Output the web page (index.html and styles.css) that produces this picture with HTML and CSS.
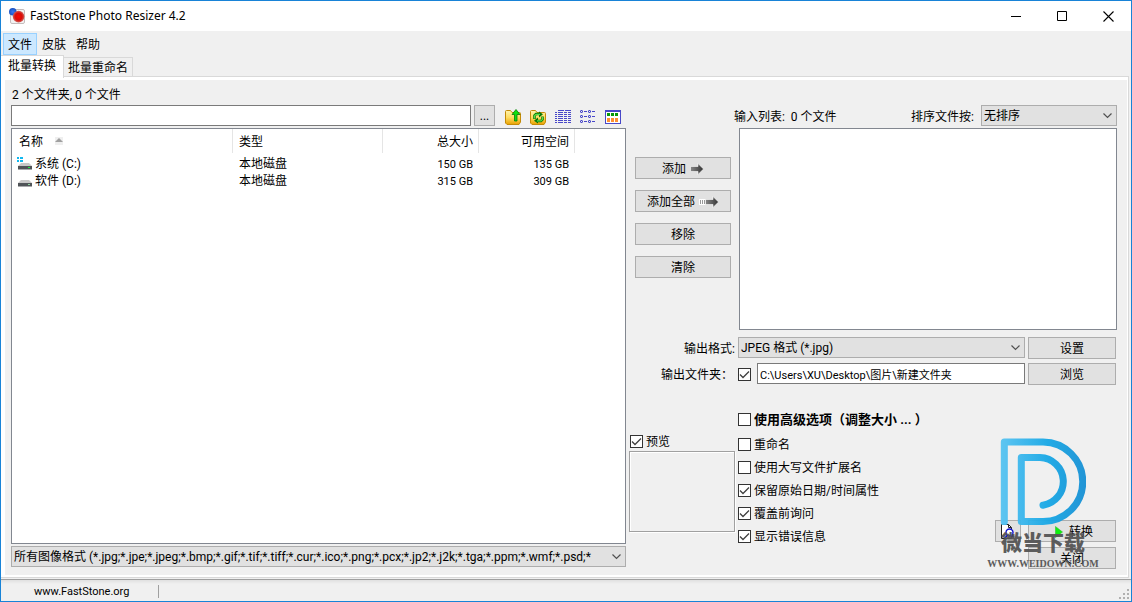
FILE: index.html
```html
<!DOCTYPE html>
<html lang="zh-CN">
<head>
<meta charset="utf-8">
<title>FastStone Photo Resizer 4.2</title>
<link rel="stylesheet" href="styles.css">
</head>
<body>
<div class="window">
  <header class="titlebar">
    <svg class="app-icon" width="16" height="16" viewBox="0 0 16 16" aria-hidden="true">
      <defs>
        <radialGradient id="red"><stop offset="0" stop-color="#f80800"/><stop offset=".6" stop-color="#d80c08"/><stop offset="1" stop-color="#d06058"/></radialGradient>
        <radialGradient id="blue"><stop offset="0" stop-color="#3878f0"/><stop offset="1" stop-color="#1850c0"/></radialGradient>
      </defs>
      <rect x="1.500" y="1.500" width="14" height="14" rx="1.500" fill="#f2f2f2" stroke="#c4bcbc"/>
      <circle cx="3.800" cy="3.800" r="3.800" fill="url(#blue)"/>
      <circle cx="9.600" cy="8.600" r="5.800" fill="url(#red)"/>
    </svg>
    <h1 class="title">FastStone Photo Resizer 4.2</h1>
    <div class="window-controls">
      <button type="button" aria-label="最小化"><svg width="11" height="11" viewBox="0 0 11 11"><path d="M0 5.500H10" stroke="#000"/></svg></button>
      <button type="button" aria-label="最大化"><svg width="11" height="11" viewBox="0 0 11 11"><path d="M.5 .5H9.500V9.500H.5Z" fill="none" stroke="#000"/></svg></button>
      <button type="button" aria-label="关闭窗口"><svg width="11" height="11" viewBox="0 0 11 11"><path d="M.5 .5L10.500 10.500M10.500 .5L.5 10.500" stroke="#000" stroke-width="1.100"/></svg></button>
    </div>
  </header>
  <nav class="menubar">
    <button type="button" class="menu-item current">文件</button>
    <button type="button" class="menu-item">皮肤</button>
    <button type="button" class="menu-item">帮助</button>
  </nav>
  <div class="tabs" role="tablist">
    <button type="button" class="tab selected" role="tab" aria-selected="true">批量转换</button>
    <button type="button" class="tab" role="tab" aria-selected="false">批量重命名</button>
  </div>
  <main class="panel">
    <div class="workspace">
      <section class="browser">
        <p class="summary">2 个文件夹, 0 个文件</p>
        <div class="path-row">
          <input class="field path" type="text" aria-label="路径">
          <button type="button" class="btn dots">...</button>
          <div class="toolbar">
            <button type="button" class="tool" aria-label="向上"><svg width="16" height="16" viewBox="0 0 16 16">
              <defs><linearGradient id="folder" x2="0" y2="1"><stop offset="0" stop-color="#fff3ac"/><stop offset=".5" stop-color="#ffdc60"/><stop offset="1" stop-color="#e8a000"/></linearGradient></defs>
              <path d="M.5 2.500Q.5 1.500 1.500 1.500H5.500L7 3.500H14.500Q15.500 3.500 15.500 4.500V13L14 15.500H2L.5 14Z" fill="url(#folder)" stroke="#c48a08"/>
              <path d="M11 .5L15 5.500H12V12H9.500V5.500H7Z" fill="#10e010" stroke="#087808" stroke-width=".8"/></svg></button>
            <button type="button" class="tool" aria-label="刷新"><svg width="16" height="16" viewBox="0 0 16 16">
              <path d="M.5 2.500Q.5 1.500 1.500 1.500H5.500L7 3.500H14.500Q15.500 3.500 15.500 4.500V13L14 15.500H2L.5 14Z" fill="url(#folder)" stroke="#c48a08"/>
              <path d="M4.500 10V6.500L6 5H9.500" fill="none" stroke="#087808" stroke-width="2.600"/><path d="M9 2.500L13 5.200L9 8.500Z" fill="#087808"/><path d="M4.500 9.500V6.800L6 5.300H10" fill="none" stroke="#58e048" stroke-width="1.200"/>
              <path d="M12.500 7.500V10.500L11 12H7.500" fill="none" stroke="#087808" stroke-width="2.600"/><path d="M8 8.500L4 11.800L8 14.500Z" fill="#087808"/><path d="M12.500 8V10.300L11 11.800H7" fill="none" stroke="#58e048" stroke-width="1.200"/></svg></button>
            <button type="button" class="tool" aria-label="详细信息"><svg width="16" height="14" viewBox="0 0 16 14">
              <path d="M3 .5H16" stroke="#4848c8" stroke-dasharray="6 1"/><path d="M0 2.500H2M0 4.500H2M0 6.500H2M0 8.500H2M0 10.500H2M0 12.500H2M3 2.500H16M3 4.500H16M3 6.500H16M3 8.500H16M3 10.500H16M3 12.500H16" stroke="#4848c8" stroke-dasharray="5 1 3 1 3"/></svg></button>
            <button type="button" class="tool" aria-label="列表"><svg width="16" height="14" viewBox="0 0 16 14" fill="none" stroke="#4848c8">
              <path d="M.5 .5h2v2h-2zM8.500 .5h2v2h-2zM.5 5.500h2v2h-2zM8.500 5.500h2v2h-2zM.5 10.500h2v2h-2zM8.500 10.500h2v2h-2z" stroke-dasharray="1.500 .5"/><path d="M4 1.500h3M12 1.500h3M4 6.500h3M12 6.500h3M4 11.500h3M12 11.500h3"/></svg></button>
            <button type="button" class="tool" aria-label="缩略图"><svg width="16" height="14" viewBox="0 0 16 14">
              <path d="M0 0H16V14H0Z" fill="#4848c8"/><path d="M1 2H15V13H1Z" fill="#fff"/><path d="M2 3h3v3h-3zM6 3h3v3h-3zM10 3h3v3h-3z" fill="#089808"/><path d="M2 8h3v4h-3zM6 8h3v4h-3zM10 8h3v4h-3z" fill="#ff9030"/></svg></button>
          </div>
        </div>
        <div class="list-box">
          <table class="files">
            <colgroup><col class="c-name"><col class="c-type"><col class="c-size"><col class="c-size"><col></colgroup>
            <thead>
              <tr><th scope="col">名称<svg class="sort" width="8" height="8" viewBox="0 0 8 8" aria-hidden="true"><path d="M0 0H8V8H0Z" fill="#efefef"/><path d="M4 1L8 5H0Z" fill="#a0a0a0"/></svg></th><th scope="col">类型</th><th scope="col" class="num">总大小</th><th scope="col" class="num">可用空间</th><td></td></tr>
            </thead>
            <tbody>
              <tr><td class="name"><svg width="16" height="16" viewBox="0 0 16 16" aria-hidden="true"><path d="M4 6H12L15 9H1Z" fill="#c8c8c8"/><path d="M1 9H15V12.500H1Z" fill="#505458"/><path d="M11 10h2v1h-2z" fill="#20f040"/><path d="M0 0h2v2h-2zM3 0h3v2h-3zM0 3h2v2h-2zM3 3h3v2h-3z" fill="#10b8f0"/></svg>系统 (C:)</td><td>本地磁盘</td><td class="num small">150 GB</td><td class="num small">135 GB</td><td></td></tr>
              <tr><td class="name"><svg width="16" height="16" viewBox="0 0 16 16" aria-hidden="true"><path d="M4 6H12L15 9H1Z" fill="#c8c8c8"/><path d="M1 9H15V12.500H1Z" fill="#505458"/><path d="M11 10h2v1h-2z" fill="#90d8a0"/></svg>软件 (D:)</td><td>本地磁盘</td><td class="num small">315 GB</td><td class="num small">309 GB</td><td></td></tr>
            </tbody>
          </table>
        </div>
        <select class="combo" aria-label="文件类型"><option>所有图像格式 (*.jpg;*.jpe;*.jpeg;*.bmp;*.gif;*.tif;*.tiff;*.cur;*.ico;*.png;*.pcx;*.jp2;*.j2k;*.tga;*.ppm;*.wmf;*.psd;*</option></select>
      </section>

      <section class="output">
        <div class="sort-row">
          <span>输入列表:&nbsp; 0 个文件</span>
          <label for="sort">排序文件按:</label>
          <select id="sort" class="combo sort-select"><option>无排序</option></select>
        </div>
        <div class="pick-row">
          <div class="actions">
            <button type="button" class="btn">添加<svg width="14" height="12" viewBox="0 0 14 12" aria-hidden="true"><defs><linearGradient id="arrow"><stop offset="0" stop-color="#888"/><stop offset="1" stop-color="#333"/></linearGradient></defs><path d="M.5 3.500H8V.5L13.500 6L8 11.500V8.500H.5Z" fill="url(#arrow)" stroke="#fff" stroke-width=".6"/></svg></button>
            <button type="button" class="btn">添加全部<svg width="20" height="12" viewBox="0 0 20 12" aria-hidden="true"><path d="M0 3H7V9H0Z" fill="#fff"/><path d="M1 4h1v4h-1zM3 4h1v4h-1zM5 4h1v4h-1z" fill="#999"/><path d="M6.500 3.500H14V.5L19.500 6L14 11.500V8.500H6.500Z" fill="url(#arrow)" stroke="#fff" stroke-width=".6"/></svg></button>
            <button type="button" class="btn">移除</button>
            <button type="button" class="btn">清除</button>
          </div>
          <div class="list-box input-list"></div>
        </div>
        <div class="form">
          <label for="format">输出格式:</label>
          <select id="format" class="combo"><option>JPEG 格式 (*.jpg)</option></select>
          <button type="button" class="btn">设置</button>
          <label for="folder-path" class="folder-label">输出文件夹：</label>
          <div class="folder">
            <input type="checkbox" class="check" checked aria-label="使用输出文件夹">
            <input id="folder-path" class="field" type="text" value="C:\Users\XU\Desktop\图片\新建文件夹">
          </div>
          <button type="button" class="btn">浏览</button>
        </div>
        <div class="bottom">
          <div class="preview">
            <label class="option"><input type="checkbox" class="check" checked>预览</label>
            <div class="preview-box"></div>
          </div>
          <div class="options">
            <label class="option strong"><input type="checkbox" class="check">使用高级选项（调整大小 ... ）</label>
            <label class="option"><input type="checkbox" class="check">重命名</label>
            <label class="option"><input type="checkbox" class="check">使用大写文件扩展名</label>
            <label class="option"><input type="checkbox" class="check" checked>保留原始日期/时间属性</label>
            <label class="option"><input type="checkbox" class="check" checked>覆盖前询问</label>
            <label class="option"><input type="checkbox" class="check" checked>显示错误信息</label>
          </div>
          <div class="run">
            <button type="button" class="btn" aria-label="查看"><svg width="16" height="16" viewBox="0 0 16 16" aria-hidden="true"><path d="M1.500 .5H8.500L11.500 3.500V14.500H1.500Z" fill="#fff" stroke="#222"/><path d="M8.500 .5V3.500H11.500" fill="none" stroke="#222"/><circle cx="9.500" cy="8.500" r="3.500" fill="#fff" stroke="#1010d0" stroke-width="1.400"/><path d="M7 11.500L4.500 14.500M12 11.500L14 13" stroke="#1010d0" stroke-width="1.600"/></svg></button>
            <button type="button" class="btn convert"><svg width="8" height="12" viewBox="0 0 8 12" aria-hidden="true"><path d="M.5 .5L7.500 6L.5 11.500Z" fill="#10f010" stroke="#30c030" stroke-width=".6"/></svg>转换</button>
            <button type="button" class="btn close">关闭</button>
            <div class="watermark">
              <svg width="86" height="88" viewBox="0 0 86 88" aria-hidden="true">
                <defs><linearGradient id="mark" gradientUnits="userSpaceOnUse" x1="0" y1="0" x2="86" y2="0"><stop offset="0" stop-color="#58c4f2"/><stop offset=".55" stop-color="#18a8e6"/><stop offset="1" stop-color="#1890d4"/></linearGradient></defs>
                <path d="M4.300 85V5H43A39.500 39.500 0 0 1 43 84.500H21.300V20.500H40A24 24 0 0 1 43 68.200" fill="none" stroke="url(#mark)" stroke-width="7" stroke-linecap="round" stroke-linejoin="round"/>
              </svg>
              <span class="mark-name">微当下载</span>
              <span class="mark-site">WWW.WEIDOWN.COM</span>
            </div>
          </div>
        </div>
      </section>
    </div>
  </main>
  <footer class="statusbar">
    <span class="site">www.FastStone.org</span>
    <svg width="12" height="12" viewBox="0 0 12 12" aria-hidden="true"><path d="M8 0h2v2h-2zM4 4h2v2h-2zM8 4h2v2h-2zM0 8h2v2h-2zM4 8h2v2h-2zM8 8h2v2h-2z" fill="#b0b0b0"/></svg>
  </footer>
</div>
</body>
</html>
```
FILE: styles.css
```css
* { box-sizing: border-box; }

body {
  margin: 0;
  color: #000;
  background: #f0f0f0;
}

body, button, input, select {
  font-family: Roboto, "Noto Sans CJK SC", sans-serif;
  font-size: 12px;
  line-height: 16px;
}

button, input, select { margin: 0; color: inherit; }

svg { flex: none; }

.window {
  display: flex;
  flex-direction: column;
  min-height: 100vh;
  border: 1px solid #1883d7;
}

.titlebar {
  display: flex;
  align-items: center;
  height: 30px;
  padding-left: 8px;
  background: #fff;
}

.title {
  flex: 1;
  margin: 0 0 0 5px;
  font-family: "Noto Sans", sans-serif;
  font-size: 12px;
  font-weight: 400;
}

.window-controls { display: flex; }

.window-controls button {
  display: flex;
  align-items: center;
  justify-content: center;
  width: 46px;
  height: 30px;
  padding: 0;
  border: 0;
  background: none;
}

.menubar {
  display: flex;
  padding: 2px 2px 0;
}

.menu-item {
  height: 22px;
  padding: 2px 4px 0;
  border: 1px solid transparent;
  background: none;
}

.menu-item.current {
  border-color: #99d1ff;
  background: #cce8ff;
}

.tabs {
  display: flex;
  align-items: flex-end;
  height: 21px;
}

.tab {
  height: 19px;
  padding: 2px 4px 0;
  border: 1px solid #d9d9d9;
  border-bottom: 0;
  border-left: 0;
  background: #f0f0f0;
}

.tab.selected {
  z-index: 1;
  height: 23px;
  margin-bottom: -2px;
  padding: 0 7px 2px;
  background: #fff;
}

.panel {
  display: flex;
  flex: 1;
  margin-right: 2px;
  padding: 3px 1px 2px 4px;
  border: 1px solid #d9d9d9;
  border-left: 0;
  background: #fff;
}

.workspace {
  display: grid;
  flex: 1;
  grid-template-columns: minmax(0, 1fr) 488px;
  gap: 3px;
  padding: 0 10px 6px 6px;
  background: #f0f0f0;
}

.browser {
  display: flex;
  flex-direction: column;
  gap: 2px;
  min-width: 0;
  padding-bottom: 2px;
}

.summary { margin: 0; padding: 7px 1px 0; }

.path-row { display: flex; gap: 3px; }

.field {
  min-width: 0;
  height: 21px;
  padding: 0 2px;
  border: 1px solid #7a7a7a;
  background: #fff;
}

.path { flex: 1; }

.btn {
  display: flex;
  align-items: center;
  justify-content: center;
  gap: 4px;
  height: 22px;
  padding: 1px 0 0;
  border: 1px solid #adadad;
  background: #e1e1e1;
}

.dots { width: 21px; height: 21px; }

.toolbar {
  display: flex;
  align-items: center;
  gap: 9px;
  width: 128px;
  padding: 2px 0 0 7px;
}

.tool {
  display: flex;
  padding: 0;
  border: 0;
  background: none;
}

.list-box {
  flex: 1;
  border: 1px solid #828790;
  background: #fff;
}

.files {
  width: 100%;
  border-collapse: separate;
  border-spacing: 0;
  table-layout: fixed;
}

.c-name { width: 221px; }
.c-type { width: 150px; }
.c-size { width: 96px; }

.files th, .files td {
  height: 17px;
  padding: 0 6px;
  font-weight: 400;
  line-height: 17px;
  text-align: left;
}

.files th {
  height: 27px;
  background: linear-gradient(#e5e5e5, #e5e5e5) right top / 1px 24px no-repeat;
}

.files th:first-child { padding-left: 7px; }

.files .num { text-align: right; }
.files .small { font-size: 11px; }

.files .name {
  display: flex;
  align-items: center;
  gap: 2px;
  padding-left: 5px;
}

.sort { margin: 0 0 1px 12px; }

.combo {
  width: 100%;
  height: 21px;
  padding: 1px 20px 0 2px;
  border: 1px solid #adadad;
  border-radius: 0;
  appearance: none;
  background: #e1e1e1 url("data:image/svg+xml,%3Csvg xmlns='http://www.w3.org/2000/svg' width='9' height='6'%3E%3Cpath d='M.5 .5L4.500 4.500L8.500 .5' fill='none' stroke='%23505050' stroke-width='1.200'/%3E%3C/svg%3E") no-repeat right 4px center;
  text-overflow: clip;
}

.output {
  display: flex;
  flex-direction: column;
  padding-top: 25px;
}

.sort-row {
  display: flex;
  align-items: center;
  gap: 7px;
  margin-bottom: 2px;
  padding-left: 105px;
}

.sort-row span { flex: 1; }
.sort-row span, .sort-row label { padding-top: 3px; }

.sort-select { width: 136px; }

.pick-row {
  display: flex;
  flex: 1;
  gap: 4px;
  min-height: 200px;
}

.actions {
  display: flex;
  flex-direction: column;
  gap: 11px;
  width: 106px;
  padding: 29px 4px 0 6px;
}

.form {
  display: grid;
  grid-template-columns: 106px minmax(0, 1fr) 88px;
  gap: 4px 3px;
  margin: 7px 1px 0 0;
}

.form label {
  align-self: center;
  padding-top: 1px;
  text-align: right;
}

.form .folder-label { padding-right: 2px; }

.folder {
  display: flex;
  align-items: center;
  gap: 6px;
}

.folder .field {
  flex: 1;
  align-self: flex-start;
  font-size: 11px;
}

.check {
  flex: none;
  width: 13px;
  height: 13px;
  margin: 0;
  border: 1px solid #333;
  appearance: none;
  background: #fff;
}

.check:checked {
  background: #fff url("data:image/svg+xml,%3Csvg xmlns='http://www.w3.org/2000/svg' width='11' height='11'%3E%3Cpath d='M1 5.500L4 8.500L10 2.500' fill='none' stroke='%23404040' stroke-width='1.300'/%3E%3C/svg%3E") center no-repeat;
}

.bottom {
  display: grid;
  grid-template-columns: 106px minmax(0, 1fr) 121px;
  gap: 3px;
  margin: 23px 1px 0 0;
}

.preview { padding-top: 24px; }
.preview .option { height: 19px; padding-left: 1px; }

.preview-box {
  height: 81px;
  border: 1px solid #a0a0a0;
  box-shadow: inset 1px 1px #fff, 1px 1px #fff;
}

.options { padding-bottom: 21px; }

.option {
  display: flex;
  align-items: center;
  gap: 3px;
  height: 23px;
  white-space: nowrap;
}

.strong {
  margin-bottom: 2px;
  font-size: 13px;
  font-weight: 700;
}

.run {
  position: relative;
  display: grid;
  grid-template-columns: 26px 88px;
  align-content: end;
  gap: 5px 7px;
}

.convert { padding-left: 4px; gap: 6px; }

.close { grid-column: 2; }

.watermark {
  position: absolute;
  right: 18px;
  bottom: -3px;
  display: flex;
  flex-direction: column;
  align-items: center;
  width: 110px;
  color: #555;
  opacity: 0.95;
  pointer-events: none;
}

.mark-name {
  margin-top: 5px;
  font-size: 21px;
  font-weight: 900;
  line-height: 26px;
}

.mark-site {
  font: 700 10px/16px "Liberation Serif", serif;
}

.statusbar {
  display: flex;
  align-items: stretch;
  justify-content: space-between;
  height: 22px;
  margin-top: 1px;
  border-top: 1px solid #a0a0a0;
  background: linear-gradient(#e0e0e0, #f0f0f0 4px);
}

.site {
  width: 158px;
  margin: 5px 0 3px;
  padding-left: 33px;
  border-right: 1px solid #a0a0a0;
  font-size: 11px;
  line-height: 13px;
}

.statusbar svg { align-self: end; }
```
